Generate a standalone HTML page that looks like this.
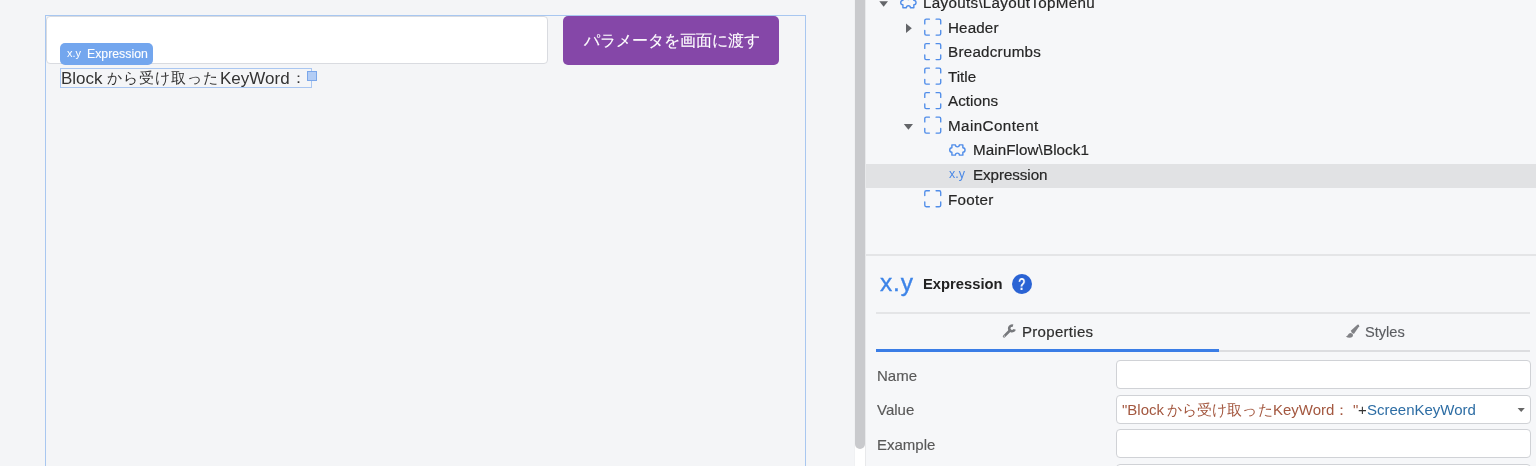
<!DOCTYPE html>
<html lang="ja">
<head>
<meta charset="utf-8">
<style>
*{margin:0;padding:0;box-sizing:border-box;}
html,body{width:1536px;height:466px;overflow:hidden;}
body{position:relative;background:#f4f5f7;font-family:"Liberation Sans",sans-serif;color:#333;}
.a{position:absolute;}
.t{position:absolute;white-space:nowrap;line-height:0;will-change:transform;}
svg{position:absolute;overflow:visible;}
/* canvas */
#outline{left:45px;top:15px;width:761px;height:470px;border:1px solid #a8c7f0;}
#input{left:46px;top:16px;width:502px;height:48px;background:#fff;border:1px solid #d9dbe0;border-radius:4px;}
#badge{left:60px;top:43px;width:93px;height:22px;background:#73a6ee;border-radius:5px;}
#tbox{left:60px;top:68px;width:252px;height:20px;border:1px solid #a9c6f1;}
#handle{left:307px;top:71px;width:10px;height:10px;background:#b3cdf5;border:1px solid #7ba7ea;}
#btn{left:563px;top:16px;width:216px;height:49px;background:#8547a8;border-radius:5px;}
/* scrollbar */
#sbar{left:854px;top:0;width:12px;height:466px;background:#fff;border-left:1px solid #f0f1f3;border-right:1px solid #e8e9eb;}
#sthumb{left:855px;top:-10px;width:10px;height:459px;background:#c9cacd;border-radius:0 0 5px 5px;}
/* right panel */
#panel{left:866px;top:0;width:670px;height:466px;background:#f6f7f9;}
#sel{left:866px;top:164px;width:670px;height:24px;background:#e1e2e4;}
.tr{color:#262626;-webkit-text-stroke:0.2px #262626;}
.hr{position:absolute;background:#e4e5e7;height:2px;}
.lab{font-size:15px;color:#585858;-webkit-text-stroke:0.15px #585858;}
.inp{position:absolute;background:#fff;border:1px solid #d0d2d6;border-radius:4px;left:1116px;width:415px;height:29px;}
</style>
</head>
<body>
<div class="a" id="outline"></div>
<div class="a" id="input"></div>
<div class="a" id="tbox"></div>
<div class="t" style="left:60.5px;top:79.1px;font-size:17px;color:#333">Block</div>
<div class="t" style="left:106.8px;top:78px;font-size:15px;letter-spacing:1px;color:#333">から受け取った</div>
<div class="t" style="left:220px;top:79.1px;font-size:17px;color:#333">KeyWord</div>
<div class="t" style="left:291px;top:78px;font-size:15px;color:#333">：</div>
<div class="a" id="handle"></div>
<div class="a" id="badge"></div>
<div class="t" style="left:67px;top:53.4px;font-size:11px;color:#fff">x.y</div>
<div class="t" style="left:87px;top:54.1px;font-size:12.3px;color:#fff;-webkit-text-stroke:0.1px #fff">Expression</div>
<div class="a" id="btn"></div>
<div class="t" style="left:583.5px;top:40.5px;font-size:16px;color:#fff;-webkit-text-stroke:0.12px #fff">パラメータを画面に渡す</div>

<div class="a" id="sbar"></div>
<div class="a" id="sthumb"></div>
<div class="a" id="panel"></div>
<div class="a" id="sel"></div>

<!-- tree arrows -->
<svg style="left:0;top:0" width="1" height="1">
  <path d="M879.3 1.2 H888 L883.65 6.8 Z" fill="#636569"/>
  <path d="M906 23.6 V33 L911.8 28.3 Z" fill="#636569"/>
  <path d="M903.8 124 H913 L908.4 129.8 Z" fill="#636569"/>
</svg>
<!-- bracket icons -->
<svg style="left:0;top:0" width="1" height="1">
  <defs>
    <g id="brk" fill="none" stroke="#508de9" stroke-width="1.35" stroke-linecap="round" stroke-linejoin="round">
      <path d="M0.78 5.5 V2.2 Q0.78 0.78 2.2 0.78 H5.4"/>
      <path d="M12.1 0.78 H15.3 Q16.72 0.78 16.72 2.2 V5.5"/>
      <path d="M16.72 12 V15.3 Q16.72 16.72 15.3 16.72 H12.1"/>
      <path d="M5.4 16.72 H2.2 Q0.78 16.72 0.78 15.3 V12"/>
    </g>
    <path id="pz" fill="none" stroke="#508de9" stroke-width="1.4" stroke-linejoin="round" d="M4.9 2.85 H8.4 A2 2 0 0 0 12.4 2.85 H15.85 V5.8 A2.2 2.2 0 0 1 15.85 10.2 V13.15 H12.4 A2 2 0 0 0 8.4 13.15 H4.9 V10.2 A2.2 2.2 0 0 1 4.9 5.8 Z"/>
  </defs>
  <use href="#brk" x="924" y="18.4"/>
  <use href="#brk" x="924" y="42.9"/>
  <use href="#brk" x="924" y="67.4"/>
  <use href="#brk" x="924" y="91.9"/>
  <use href="#brk" x="924" y="116.4"/>
  <use href="#brk" x="924" y="190.0"/>
  <use href="#pz" x="947" y="142"/>
  <use href="#pz" x="898" y="-5.4"/>
</svg>

<div class="t tr" style="left:923px;top:3px;font-size:15.2px;letter-spacing:0.305px">Layouts\LayoutTopMenu</div>
<div class="t tr" style="left:948px;top:28px;font-size:15.2px;letter-spacing:0.14px">Header</div>
<div class="t tr" style="left:948px;top:52px;font-size:15.2px;letter-spacing:0.25px">Breadcrumbs</div>
<div class="t tr" style="left:948px;top:77px;font-size:15.2px;letter-spacing:0.0px">Title</div>
<div class="t tr" style="left:948px;top:101px;font-size:15.2px;letter-spacing:0.03px">Actions</div>
<div class="t tr" style="left:947.5px;top:126px;font-size:15.2px;letter-spacing:0.42px">MainContent</div>
<div class="t tr" style="left:972.5px;top:150px;font-size:15.2px;letter-spacing:0.08px">MainFlow\Block1</div>
<div class="t" style="left:949.4px;top:173.7px;font-size:12.5px;color:#4a88e6">x.y</div>
<div class="t tr" style="left:972.5px;top:175px;font-size:15.2px;letter-spacing:-0.07px">Expression</div>
<div class="t tr" style="left:948px;top:200px;font-size:15.2px;letter-spacing:0.3px">Footer</div>

<div class="hr" style="left:866px;top:254px;width:670px;"></div>
<div class="t" style="left:879.5px;top:283px;font-size:24.5px;letter-spacing:0.8px;color:#3d84e8;-webkit-text-stroke:0.35px #3d84e8;">x.y</div>
<div class="t" style="left:922.6px;top:283.9px;font-size:14.75px;font-weight:bold;color:#222;">Expression</div>
<div class="a" style="left:1012px;top:274px;width:20px;height:20px;border-radius:50%;background:#2a63d4;"></div>
<div class="t" style="left:1018.2px;top:284.6px;font-size:15.6px;font-weight:bold;color:#fff;transform:scaleX(0.8);transform-origin:0 0;">?</div>
<div class="hr" style="left:876px;top:312px;width:654px;"></div>

<!-- wrench -->
<svg style="left:0;top:0" width="1" height="1">
  <path d="M1012.96 325.77 A2.8 2.8 0 1 0 1014.63 329.36" fill="none" stroke="#77797d" stroke-width="2.6"/>
  <line x1="1009.9" y1="330.5" x2="1004.1" y2="336.3" stroke="#77797d" stroke-width="2.6" stroke-linecap="round"/>
  <circle cx="1004.3" cy="336.1" r="0.6" fill="#f6f7f9"/>
</svg>
<!-- brush -->
<svg style="left:0;top:0" width="1" height="1">
  <path d="M1357.4 324.71 Q1359.2 323.9 1359.2 326.29 L1354.05 333.65 Q1352.2 334.6 1350.75 330.75 Z" fill="#818286"/>
  <path d="M1353 335 Q1353 337.8 1349.6 337.8 Q1347.4 337.8 1345.8 336.6 Q1347.4 336.2 1348 334.8 Q1349.2 332.6 1351.4 333.2 Q1353 333.7 1353 335 Z" fill="#818286"/>
</svg>
<div class="t" style="left:1022.3px;top:332px;font-size:15px;letter-spacing:0.3px;color:#2e2e2e;-webkit-text-stroke:0.2px #2e2e2e;">Properties</div>
<div class="t" style="left:1365px;top:332.44px;font-size:14.6px;color:#5b5d61;-webkit-text-stroke:0.15px #5b5d61;">Styles</div>
<div class="hr" style="left:876px;top:350px;width:654px;background:#dcdde0"></div>
<div class="a" style="left:876px;top:349px;width:343px;height:3px;background:#3a7de6"></div>

<div class="t lab" style="left:876.5px;top:375.5px;">Name</div>
<div class="t lab" style="left:876.5px;top:409.8px;">Value</div>
<div class="t lab" style="left:876.5px;top:444.6px;">Example</div>
<div class="inp" style="top:360px;"></div>
<div class="inp" style="top:395px;"></div>
<div class="inp" style="top:429px;"></div>
<div class="inp" style="top:464px;"></div>
<div class="t" style="left:1122.2px;top:409.6px;font-size:15px;color:#a3573f;">"Block</div>
<div class="t" style="left:1167.2px;top:409.7px;font-size:14.6px;letter-spacing:0.1px;color:#a3573f;">から受け取った</div>
<div class="t" style="left:1272.5px;top:409.6px;font-size:15px;color:#a3573f;">KeyWord</div>
<div class="t" style="left:1333.8px;top:409.7px;font-size:14.7px;color:#a3573f;">：</div>
<div class="t" style="left:1352.7px;top:409.6px;font-size:15px;color:#a3573f;">"</div>
<div class="t" style="left:1358.3px;top:409.6px;font-size:15px;color:#333;">+</div>
<div class="t" style="left:1366.6px;top:409.6px;font-size:15px;color:#2d6da4;">ScreenKeyWord</div>
<svg style="left:0;top:0" width="1" height="1"><path d="M1517.6 407.9 H1524.8 L1521.2 412 Z" fill="#666"/></svg>
</body>
</html>
